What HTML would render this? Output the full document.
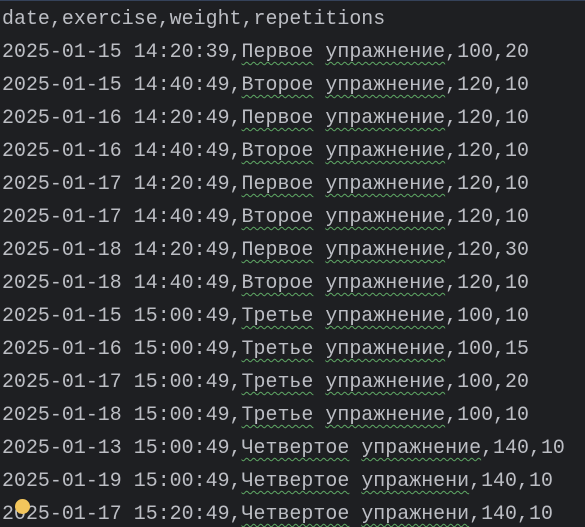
<!DOCTYPE html>
<html><head><meta charset="utf-8"><style>
html,body{margin:0;padding:0;background:#1e1f22;width:585px;height:527px;overflow:hidden}
body{border-top:1px solid #35425a;box-sizing:border-box}
pre{margin:0;padding:0 0 0 2px;font-family:"Liberation Mono","DejaVu Sans Mono",monospace;font-size:19.9px;letter-spacing:0.04px;line-height:33px;color:#bcbec4;position:relative;top:1px}
u{text-decoration:underline wavy #5fa865;text-decoration-thickness:1px;text-underline-offset:4px}
.dot{position:absolute;left:15px;top:499px;width:15px;height:15px;border-radius:50%;background:#f2c55c}
</style></head><body>
<pre>date,exercise,weight,repetitions
2025-01-15 14:20:39,<u>Первое</u> <u>упражнение</u>,100,20
2025-01-15 14:40:49,<u>Второе</u> <u>упражнение</u>,120,10
2025-01-16 14:20:49,<u>Первое</u> <u>упражнение</u>,120,10
2025-01-16 14:40:49,<u>Второе</u> <u>упражнение</u>,120,10
2025-01-17 14:20:49,<u>Первое</u> <u>упражнение</u>,120,10
2025-01-17 14:40:49,<u>Второе</u> <u>упражнение</u>,120,10
2025-01-18 14:20:49,<u>Первое</u> <u>упражнение</u>,120,30
2025-01-18 14:40:49,<u>Второе</u> <u>упражнение</u>,120,10
2025-01-15 15:00:49,<u>Третье</u> <u>упражнение</u>,100,10
2025-01-16 15:00:49,<u>Третье</u> <u>упражнение</u>,100,15
2025-01-17 15:00:49,<u>Третье</u> <u>упражнение</u>,100,20
2025-01-18 15:00:49,<u>Третье</u> <u>упражнение</u>,100,10
2025-01-13 15:00:49,<u>Четвертое</u> <u>упражнение</u>,140,10
2025-01-19 15:00:49,<u>Четвертое</u> <u>упражнени</u>,140,10
2025-01-17 15:20:49,<u>Четвертое</u> <u>упражнени</u>,140,10</pre>
<div class="dot"></div>
</body></html>
